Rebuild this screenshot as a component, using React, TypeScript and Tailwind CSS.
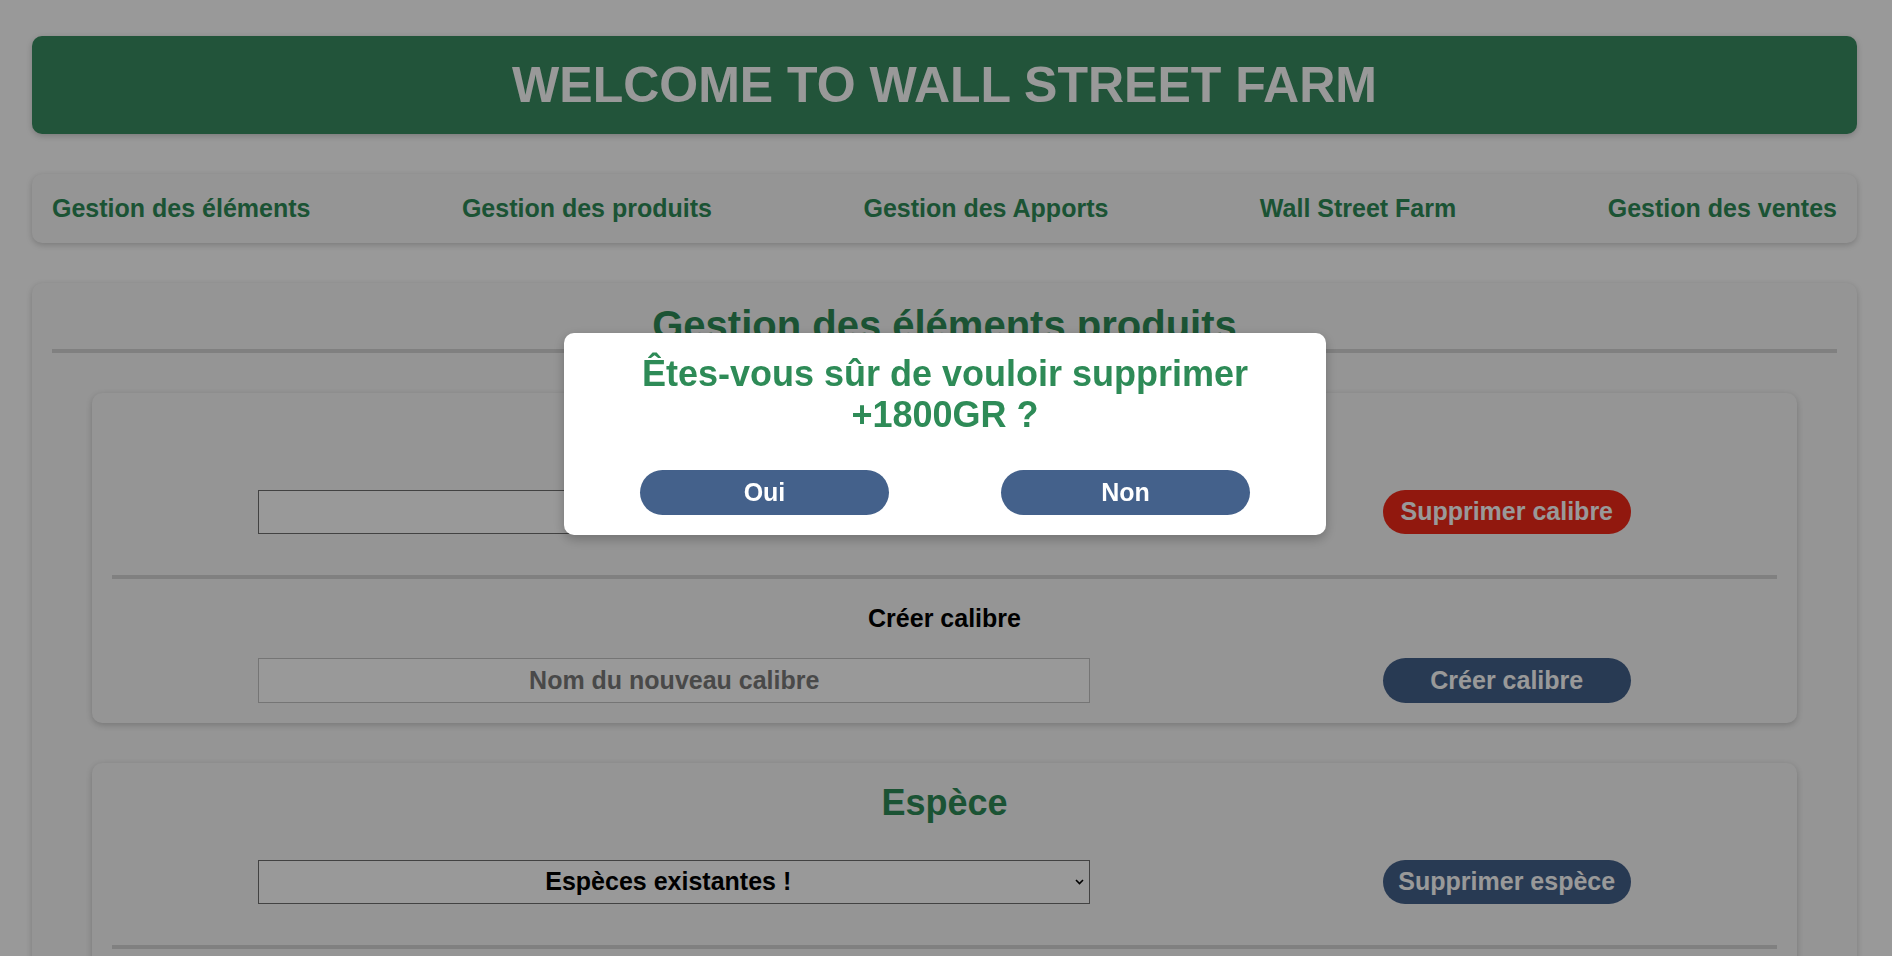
import React from "react";

function Chevron() {
  return (
    <svg width="9" height="6" viewBox="0 0 9 6" className="pointer-events-none absolute right-[6px] top-1/2 -translate-y-1/2">
      <path d="M1 1 L4.5 4.5 L8 1" fill="none" stroke="#000" strokeWidth="1.6" />
    </svg>
  );
}

function Card({ title, selectLabel, deleteLabel, deleteRed, createLabel, placeholder }: { title: string; selectLabel: string; deleteLabel: string; deleteRed?: boolean; createLabel: string; placeholder: string }) {
  return (
    <div className="mx-[40px] mt-[40px] rounded-[10px] bg-[#f8f8f8] px-[20px] py-[20px] shadow-[0_2px_6px_rgba(0,0,0,0.2)]">
      <h2 className="text-center text-[36px] leading-[40px] text-[#2e8b57]">{title}</h2>
      <div className="mt-[37px] flex items-center justify-around">
        <div className="relative w-[832px]">
          <select className="h-[44px] w-full appearance-none border border-[#6e6e6e] bg-white pl-0 pr-[12px] text-center text-[25px] font-bold text-black [text-align-last:center]">
            <option>{selectLabel}</option>
          </select>
          <Chevron />
        </div>
        <button className={`h-[44px] w-[248px] rounded-full text-[25px] font-bold text-white ${deleteRed ? "bg-[#f22818]" : "bg-[#44618b]"}`}>{deleteLabel}</button>
      </div>
      <div className="mt-[41px] h-[4px] bg-[#d5d5d5]" />
      <div className="mt-[25px] text-center text-[25px] leading-[29px] text-black">{createLabel}</div>
      <div className="mt-[25px] flex items-center justify-around">
        <input placeholder={placeholder} className="h-[45px] w-[832px] border border-[#c4c4c4] bg-white text-center text-[25px] font-bold placeholder:text-[#7a7a7a]" />
        <button className="h-[45px] w-[248px] rounded-full bg-[#44618b] text-[25px] font-bold text-white">{createLabel}</button>
      </div>
    </div>
  );
}

export default function App() {
  const nav = ["Gestion des éléments", "Gestion des produits", "Gestion des Apports", "Wall Street Farm", "Gestion des ventes"];
  return (
    <div className="relative h-screen overflow-hidden bg-white pl-[32px] pr-[35px] pt-[36px] font-['Liberation_Sans',Arial,Helvetica,sans-serif] font-bold">
      <header className="rounded-[10px] bg-[#398c61] py-[20px] text-center text-[50px] leading-[58px] text-white shadow-[0_2px_6px_rgba(0,0,0,0.2)]">
        WELCOME TO WALL STREET FARM
      </header>
      <nav className="mt-[40px] flex justify-between rounded-[10px] bg-[#f8f8f8] px-[20px] py-[20px] text-[25px] leading-[29px] text-[#2e8b57] shadow-[0_2px_6px_rgba(0,0,0,0.2)]">
        {nav.map((n) => (
          <a key={n} className="cursor-pointer">{n}</a>
        ))}
      </nav>
      <main className="mt-[40px] rounded-[10px] bg-[#f8f8f8] px-[20px] pb-[40px] pt-[19px] shadow-[0_2px_6px_rgba(0,0,0,0.2)]">
        <h1 className="text-center text-[40px] leading-[46px] text-[#2e8b57]">Gestion des éléments produits</h1>
        <div className="mt-[1px] h-[4px] bg-[#d5d5d5]" />
        <Card title="Calibre" selectLabel="" deleteLabel="Supprimer calibre" deleteRed createLabel="Créer calibre" placeholder="Nom du nouveau calibre" />
        <Card title="Espèce" selectLabel="Espèces existantes !" deleteLabel="Supprimer espèce" createLabel="Créer espèce" placeholder="Nom de la nouvelle espèce" />
      </main>

      <div className="fixed inset-0 bg-black/40" />
      <div className="fixed left-[564px] top-[333px] w-[762px] rounded-[10px] bg-white p-[20px] shadow-[0_4px_12px_rgba(0,0,0,0.25)]">
        <h2 className="text-center text-[36px] leading-[41px] text-[#2e8b57]">
          Êtes-vous sûr de vouloir supprimer
          <br />
          +1800GR ?
        </h2>
        <div className="mt-[35px] flex justify-around">
          <button className="h-[45px] w-[249px] rounded-full bg-[#44618b] text-[25px] font-bold text-white">Oui</button>
          <button className="h-[45px] w-[249px] rounded-full bg-[#44618b] text-[25px] font-bold text-white">Non</button>
        </div>
      </div>
    </div>
  );
}
